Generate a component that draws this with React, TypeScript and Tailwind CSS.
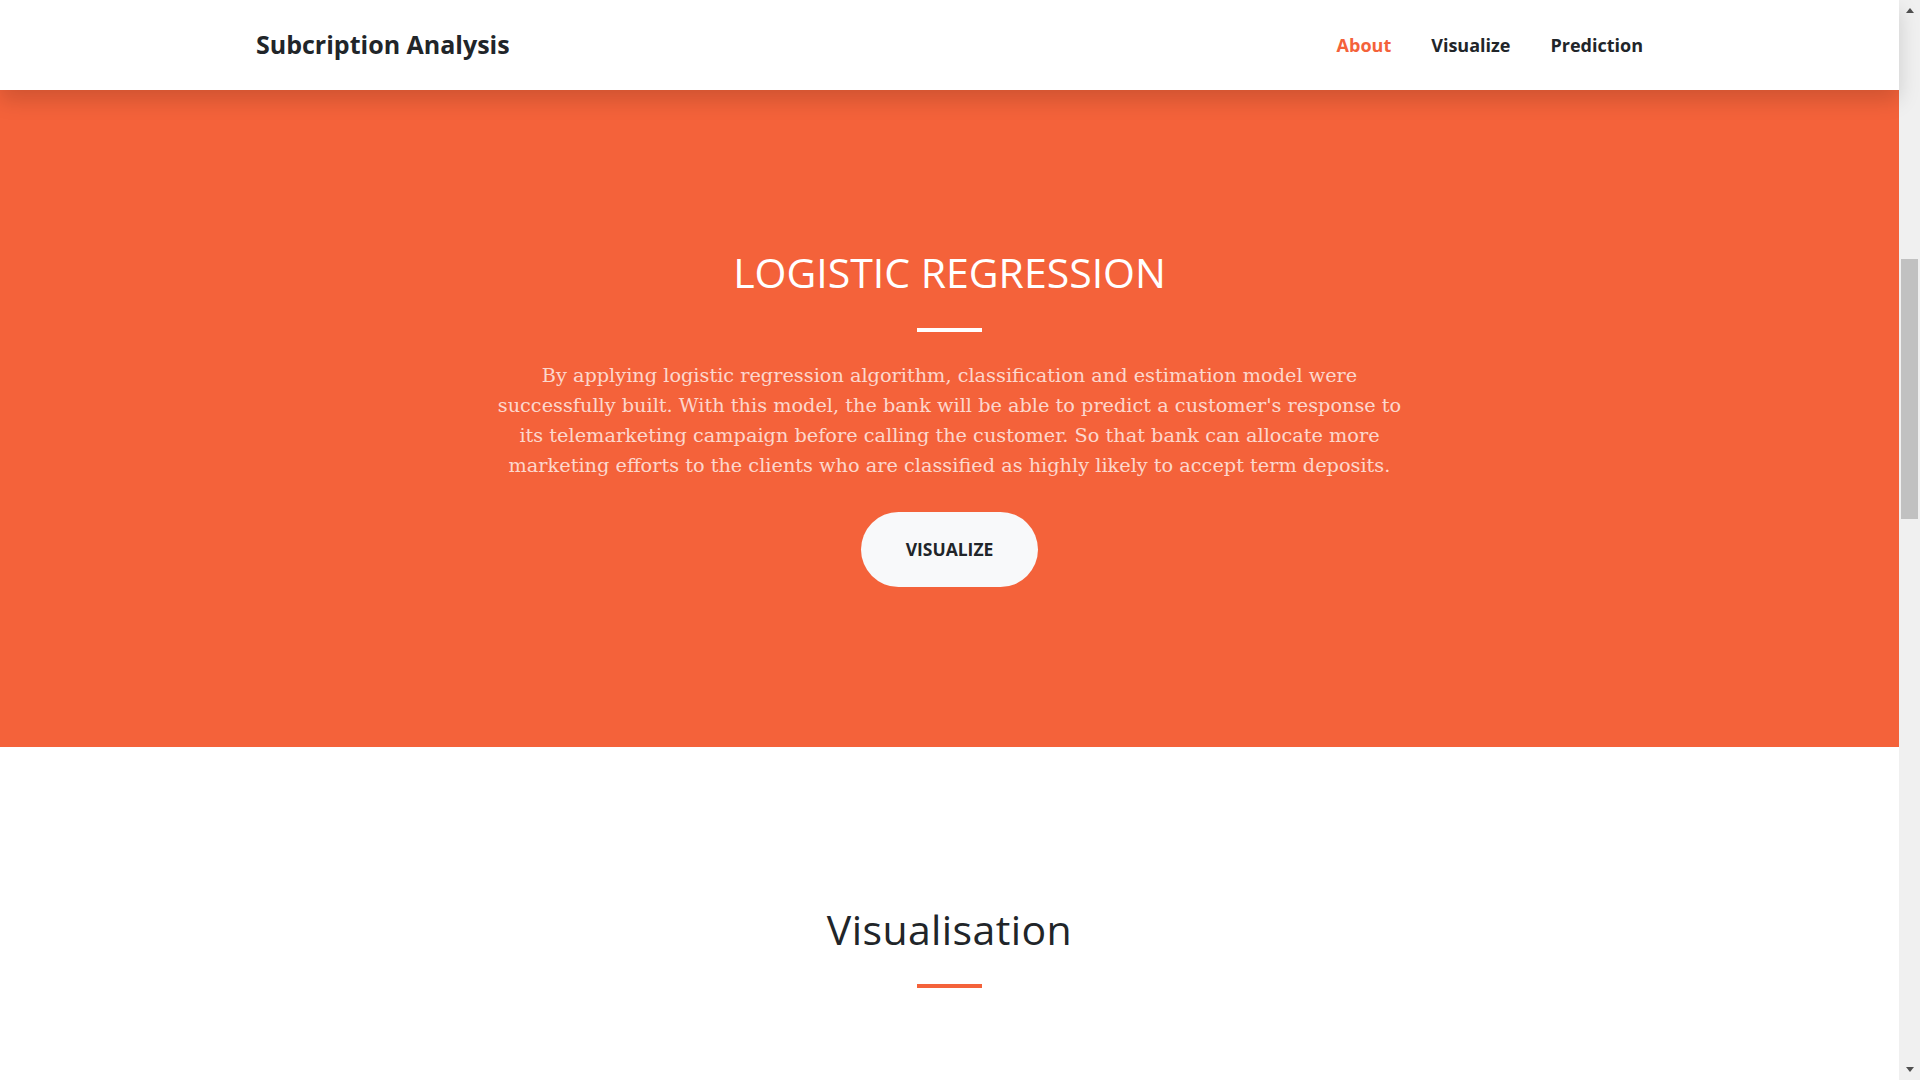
import React from 'react';

const heading = "font-['Open_Sans',sans-serif]";
const serif = "font-['DejaVu_Serif',serif]";

const navLinks = [
  { label: 'About', active: true },
  { label: 'Visualize', active: false },
  { label: 'Prediction', active: false },
];

const Navbar: React.FC = () => (
  <nav className="relative z-10 h-[90px] shrink-0 bg-white shadow-[0_10px_20px_rgba(0,0,0,0.15)]">
    <div className={`mx-auto flex h-full w-[1425px] items-center justify-between px-[19px] ${heading}`}>
      <span className="text-[25px] font-bold text-[#212529]">Subcription Analysis</span>
      <ul className="-mr-[20px] flex items-center">
        {navLinks.map((link) => (
          <li key={link.label}>
            <a
              href="#"
              className={`block px-[20px] text-[18px] font-bold ${link.active ? 'text-[#f4623a]' : 'text-[#212529]'}`}
            >
              {link.label}
            </a>
          </li>
        ))}
      </ul>
    </div>
  </nav>
);

// window scrollbar, page scrolled down to the about section
const Scrollbar: React.FC = () => (
  <div className="flex w-[21px] shrink-0 flex-col bg-[#f0f0f0]">
    <div className="flex h-[21px] items-center justify-center">
      <span className="h-0 w-0 border-x-[4.5px] border-b-[5px] border-x-transparent border-b-[#505050]" />
    </div>
    <div className="flex flex-1 flex-col px-[2px] pt-[238px]">
      <div className="h-[260px] bg-[#c1c1c1]" />
    </div>
    <div className="flex h-[21px] items-center justify-center">
      <span className="h-0 w-0 border-x-[4.5px] border-t-[5px] border-x-transparent border-t-[#505050]" />
    </div>
  </div>
);

const App: React.FC = () => {
  return (
    <div className="flex h-[1080px] overflow-hidden bg-white">
      <main className="flex min-w-0 flex-1 flex-col">
        <Navbar />

        {/* about */}
        <section id="about" className="flex h-[657px] shrink-0 flex-col items-center bg-[#f4623a] pt-[158px]">
          <h2 className={`text-[41px] leading-[48px] font-normal text-white ${heading}`}>LOGISTIC REGRESSION</h2>
          <hr className="mt-[32px] h-[4px] w-[65px] border-0 bg-white" />
          <p className={`mt-[29px] text-center text-[19.3px] leading-[30px] text-white/75 ${serif}`}>
            By applying logistic regression algorithm, classification and estimation model were
            <br />
            successfully built. With this model, the bank will be able to predict a customer's response to
            <br />
            its telemarketing campaign before calling the customer. So that bank can allocate more
            <br />
            marketing efforts to the clients who are classified as highly likely to accept term deposits.
          </p>
          <button
            className={`mt-[31px] h-[75px] rounded-full bg-[#f8f9fa] px-[45px] text-[17.5px] font-bold uppercase text-[#212529] ${heading}`}
          >
            Visualize
          </button>
        </section>

        {/* visualisation */}
        <section id="visualize" className="flex flex-1 flex-col items-center pt-[158px]">
          <h2 className={`text-[41px] leading-[48px] font-medium tracking-[0.4px] text-[#212529] ${heading}`}>
            Visualisation
          </h2>
          <hr className="mt-[31px] h-[4px] w-[65px] border-0 bg-[#f4623a]" />
        </section>
      </main>
      <Scrollbar />
    </div>
  );
};

export default App;
